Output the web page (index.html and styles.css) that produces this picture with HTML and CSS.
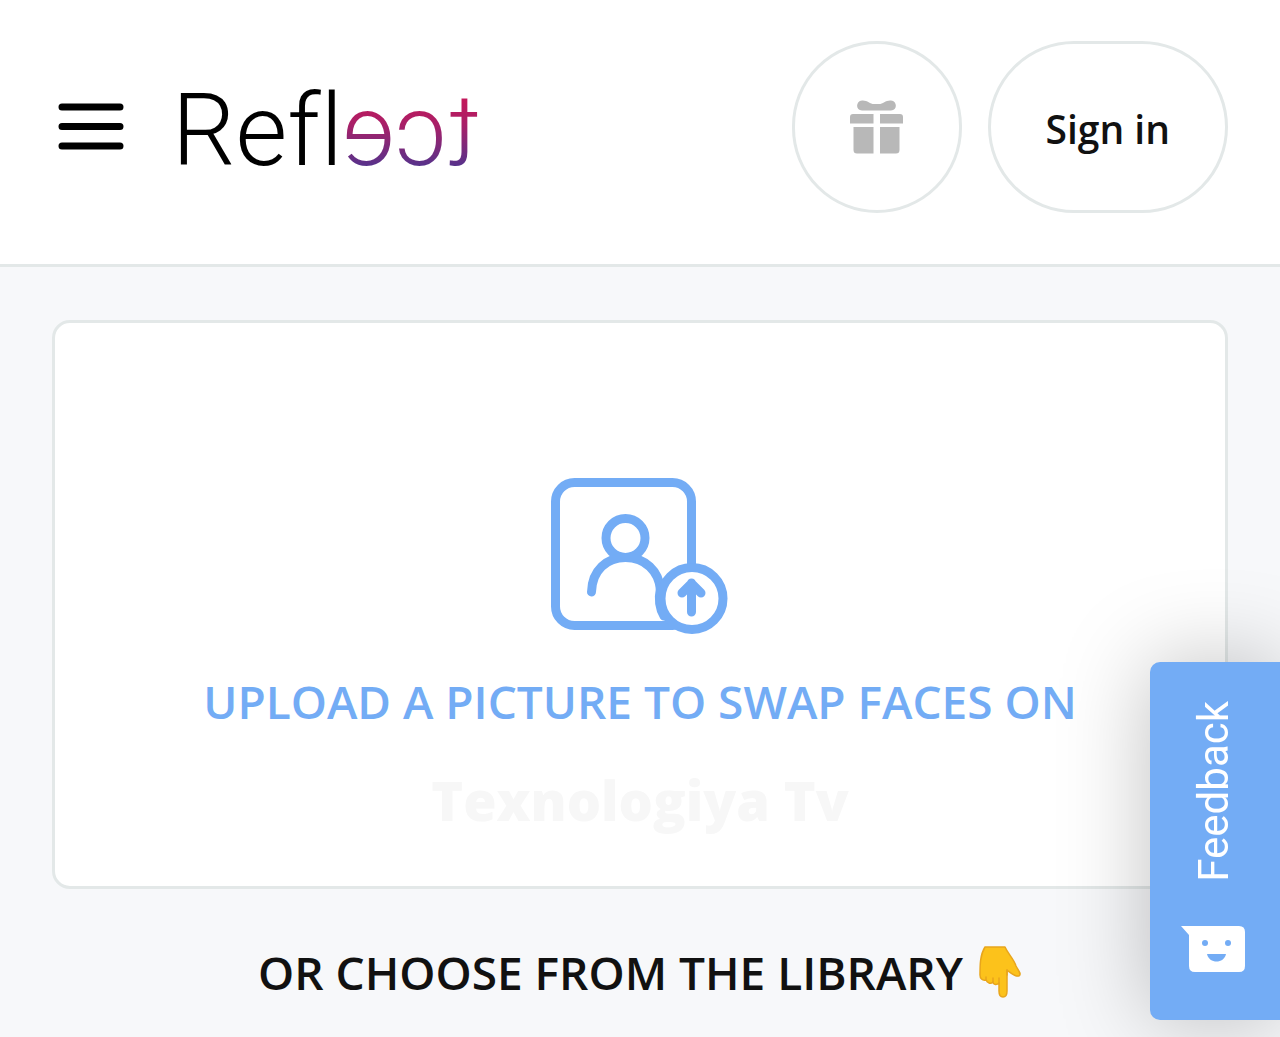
FILE: index.html
```html
<!DOCTYPE html>
<html lang="en">
<head>
  <meta charset="UTF-8">
  <meta name="viewport" content="width=device-width, initial-scale=1.0">
  <title>Reflect</title>
  <link rel="stylesheet" href="styles.css">
</head>
<body>
  <header class="header">
    <button class="menu-btn" type="button" aria-label="Menu">
      <svg width="66" height="48" viewBox="0 0 66 48" fill="none" stroke="#000" stroke-width="7" stroke-linecap="round">
        <path d="M4 4H62M4 23.500H62M4 43H62"/>
      </svg>
    </button>
    <a class="logo" href="#" aria-label="Reflect">Refl<span class="mirror">e</span><span class="mirror">c</span><span class="mirror">t</span></a>

    <div class="actions">
      <button class="pill gift-btn" type="button" aria-label="Gifts">
        <svg width="53" height="54" viewBox="0 0 53 54" fill="#b8b8b8">
          <path d="M12 10.500C5.500 10.500 5.500 1 12 .5C17 0 20 4 24 4H29C33 4 36 0 41 .5C47.500 1 47.500 10.500 41 10.500Z"/>
          <path d="M3 14H23.500V23.500H0V17Q0 14 3 14ZM30 14H50Q53 14 53 17V23.500H30Z"/>
          <path d="M3.500 27H23.500V53.500H7Q3.500 53.500 3.500 50ZM30 27H49.500V50Q49.500 53.500 46 53.500H30Z"/>
        </svg>
      </button>
      <button class="pill signin-btn" type="button">Sign in</button>
    </div>
  </header>

  <main class="content">
    <button class="upload" type="button">
      <svg class="upload-icon" width="178" height="156" viewBox="0 0 178 156" fill="none" stroke="#73acf5" stroke-width="9" stroke-linecap="round">
        <rect x="4.500" y="4.500" width="136" height="143" rx="19"/>
        <circle cx="74.500" cy="60" r="19.500"/>
        <path d="M40.500 114C41 92 56 79.500 74.500 79.500C94 79.500 108 93 109.500 112"/>
        <path d="M109.500 110C107 122 108 130 113 138"/>
        <circle cx="141" cy="120.500" r="31" fill="#fff"/>
        <path d="M140.500 134V105M131 115L140.500 105.500L150 115" stroke-linejoin="round"/>
      </svg>
      <span class="upload-title">UPLOAD A PICTURE TO SWAP FACES ON</span>
      <span class="watermark">Texnologiya Tv</span>
    </button>

    <h2 class="library-title">
      OR CHOOSE FROM THE LIBRARY
      <svg width="43" height="52" viewBox="0 0 43 52" role="img" aria-label="pointing down">
        <path d="M6 1H26C29 8 35 13 37 20C39 24 43 28 40 30C36 31 32 27 28 24V45C28 53 20 53 20 45V37C17 40 14 38 14 36C11 39 8 36 7 34C3 35 1 32 1 29C1 19 1 9 6 1Z" fill="#fcc21b" stroke="#e8a51c" stroke-width="1.500" stroke-linejoin="round"/>
        <path d="M20 37V32M14 36V32M7 34V31M28 24V29" fill="none" stroke="#e8a51c" stroke-width="1.500" stroke-linecap="round"/>
      </svg>
    </h2>
  </main>

  <button class="feedback" type="button">
    <span class="feedback-text">Feedback</span>
    <svg width="64" height="46" viewBox="0 0 64 46">
      <path d="M0 0H58Q64 0 64 6V40Q64 46 58 46H14Q8 46 8 40V9Z" fill="#fff"/>
      <g fill="#73acf5">
        <circle cx="24" cy="17" r="3"/>
        <circle cx="47" cy="17" r="3"/>
        <path d="M26 28H45C43 38 28 38 26 28Z"/>
      </g>
    </svg>
  </button>
</body>
</html>
```
FILE: styles.css
```css
* {
  box-sizing: border-box;
}

body {
  margin: 0;
  min-height: 100vh;
  background: #f7f8fa;
  color: #111;
  font-family: "Open Sans", sans-serif;
  overflow-x: hidden;
}

button {
  padding: 0;
  border: none;
  background: none;
  color: inherit;
  font: inherit;
  cursor: pointer;
}

svg {
  display: block;
  flex-shrink: 0;
}

/* Header */
.header {
  display: flex;
  align-items: center;
  padding: 41px 52px 51px 58px;
  background: #fff;
  border-bottom: 3px solid #e3e8e8;
}

.logo {
  margin-left: 48px;
  padding-top: 8px;
  color: #000;
  font-family: Roboto, sans-serif;
  font-size: 100px;
  font-weight: 300;
  font-variant-ligatures: none;
  line-height: 120px;
  text-decoration: none;
}

.mirror {
  display: inline-block;
  transform: scaleX(-1);
  background: linear-gradient(#c2185b 25%, #a82068 45%, #55328c 80%);
  background-clip: text;
  -webkit-background-clip: text;
  color: transparent;
}

.actions {
  display: flex;
  gap: 26px;
  margin-left: auto;
}

.pill {
  display: flex;
  align-items: center;
  justify-content: center;
  height: 172px;
  border: 3px solid #e3e8e8;
  border-radius: 86px;
  background: #fff;
}

.gift-btn {
  width: 170px;
}

.signin-btn {
  padding: 2px 55px 0;
  font-size: 39px;
  font-weight: 600;
}

/* Upload card */
.content {
  padding: 53px 52px 24px;
}

.upload {
  display: flex;
  flex-direction: column;
  align-items: center;
  width: 100%;
  padding: 155px 24px 36px;
  border: 3px solid #e3e8e8;
  border-radius: 18px;
  background: #fff;
}

.upload-title {
  margin-top: 35px;
  color: #73acf5;
  font-size: 46px;
  font-weight: 600;
  line-height: 64px;
}

.watermark {
  margin-top: 17px;
  color: #f7f7f7;
  font-size: 54px;
  font-weight: 800;
  line-height: 100px;
}

.library-title {
  display: flex;
  align-items: center;
  justify-content: center;
  gap: 16px;
  margin: 51px 0 0;
  font-size: 46px;
  font-weight: 600;
  line-height: 64px;
}

/* Feedback tab, floats over the right edge */
.feedback {
  position: fixed;
  right: 0;
  bottom: 17px;
  display: flex;
  flex-direction: column;
  align-items: center;
  gap: 44px;
  width: 130px;
  padding: 39px 4px 48px 0;
  border-radius: 10px 0 0 10px;
  background: #73acf5;
  box-shadow: 0 0 90px rgba(0, 0, 0, 0.25);
  color: #fff;
  font-family: Roboto, sans-serif;
  font-size: 42px;
}

.feedback-text {
  writing-mode: vertical-rl;
  transform: rotate(180deg);
}
```
